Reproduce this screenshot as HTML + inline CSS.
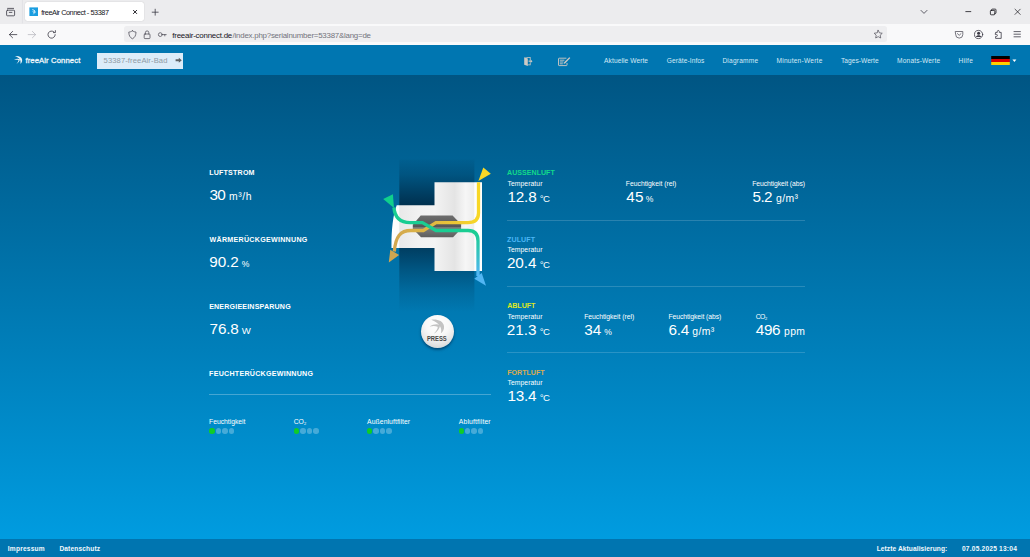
<!DOCTYPE html>
<html lang="de">
<head>
<meta charset="utf-8">
<title>freeAir Connect - 53387</title>
<style>
*{box-sizing:border-box;margin:0;padding:0}
html,body{width:1030px;height:557px;overflow:hidden}
body{font-family:"Liberation Sans",sans-serif;color:#fff;background:#0080c0;position:relative}
.abs,.t,.dots,.hr{position:absolute;white-space:nowrap}
.t{height:20px;line-height:20px}
#tabs{left:0;top:0;width:1030px;height:23.5px;background:#ececee}
#tool{left:0;top:23.5px;width:1030px;height:21.5px;background:#f9f9fa}
#tab{left:25.3px;top:2.1px;width:118.9px;height:19.2px;background:#fff;border-radius:2.5px;box-shadow:0 0 1.2px rgba(0,0,0,.22)}
#url{left:124px;top:26.2px;width:762.7px;height:16.3px;background:#eeeef0;border-radius:2.5px}
#page{left:0;top:45px;width:1030px;height:512px;background:linear-gradient(#005583 30px,#009ce0 494px)}
#nav{left:0;top:45.2px;width:1030px;height:29.8px;background:#0076b1}
#foot{left:0;top:538.7px;width:1030px;height:18.3px;background:#0075b0}
#inp{left:96.5px;top:52.5px;width:86px;height:16.2px;background:#dcecf9}
.hr{height:1px;background:rgba(255,255,255,.16)}
.dots{display:flex;gap:1.1px}
.dots i{display:block;width:5.4px;height:5.4px;border-radius:50%;background:rgba(255,255,255,.27)}
.dots i.on{background:#10cc26}
</style>
</head>
<body>
<div class="abs" id="tabs"></div>
<div class="abs" id="tool"></div>
<div class="abs" id="tab"></div>
<div class="abs" id="url"></div>
<svg class="abs" style="left:0;top:0" width="1030" height="45" viewBox="0 0 1030 45" fill="none" stroke="#3a3944" stroke-width="0.8" stroke-linecap="round" stroke-linejoin="round">
<line x1="22.4" y1="0" x2="22.4" y2="23" stroke="#d8d8de" stroke-width="0.6"/>
<!-- archive icon -->
<rect x="6.6" y="10.2" width="8" height="5.6" rx="0.8"/><path d="M7.6 8.4h6M9.3 12.4h2.6"/>
<!-- favicon -->
<rect x="29.4" y="7.4" width="8.6" height="8.6" fill="#1a9de0" stroke="none"/>
<path d="M32.6 9.6c1.6.2 2.6 1.2 2.6 2.8M34.2 10.4c.6 1.2.4 2.6-.6 3.6M33 11.4l.8 1.2" stroke="#fff" stroke-width="0.7"/>
<!-- tab close -->
<path d="M133.400 10.300l3.300 3.300M136.700 10.300l-3.300 3.300" stroke="#15141a" stroke-width="0.9"/>
<!-- plus -->
<path d="M152.2 12.2h6M155.2 9.2v6" stroke="#3a3944" stroke-width="0.8"/>
<!-- back -->
<path d="M9.4 34.6h7.4M12.6 31.4l-3.2 3.2 3.2 3.2" stroke="#3a3944"/>
<!-- forward -->
<path d="M28.2 34.6h7.4M32.4 31.4l3.2 3.2-3.2 3.2" stroke="#b9b9c0"/>
<!-- reload -->
<path d="M55.2 34.6a3.6 3.6 0 1 1-1.2-2.7M55.4 30.6v2h-2" stroke="#3a3944"/>
<!-- shield -->
<path d="M132.4 30.8c1.2.9 2.4 1.2 3.6 1.2 0 3.400-1.200 5.600-3.600 6.800-2.400-1.200-3.600-3.400-3.600-6.800 1.200 0 2.400-.3 3.600-1.200z" stroke="#55545e"/>
<!-- lock -->
<rect x="144.2" y="34" width="5.800" height="4.600" rx="0.8" stroke="#55545e"/><path d="M145.400 34v-1.400a1.700 1.700 0 0 1 3.400 0V34" stroke="#55545e"/>
<!-- key -->
<circle cx="160.300" cy="34.600" r="1.900" stroke="#55545e"/><path d="M162.200 34.600h4M164.800 34.600v1.300" stroke="#55545e"/>
<!-- star -->
<path d="M878.200 30.300l1.250 2.550 2.800.4-2.050 1.950.5 2.800-2.500-1.350-2.500 1.350.5-2.800-2.050-1.950 2.800-.4z" stroke="#55545e" stroke-width="0.75"/>
<!-- chevron -->
<path d="M921 10.400l3 3 3-3" stroke="#3a3944"/>
<!-- minimize -->
<path d="M965.800 11.600h5" stroke="#15141a"/>
<!-- restore -->
<rect x="990.400" y="10.400" width="4.400" height="4.400" rx="0.800" stroke="#15141a"/><path d="M991.600 10.200v-.3a.8.800 0 0 1 .8-.8h2.800a.8.800 0 0 1 .8.800v2.800a.8.800 0 0 1-.8.800h-.3" stroke="#15141a"/>
<!-- win close -->
<path d="M1015 9.200l5.200 5.200M1020.200 9.200l-5.200 5.200" stroke="#15141a" stroke-width="0.7"/>
<!-- pocket -->
<path d="M955.600 31.500h7.200v3a3.600 3.600 0 0 1-7.200 0z" stroke="#55545e"/><path d="M957.400 33.600l1.800 1.700 1.800-1.700" stroke="#55545e"/>
<!-- account -->
<circle cx="978.600" cy="34.500" r="4.100" stroke="#3a3944"/><circle cx="978.600" cy="33.300" r="1.500" fill="#3a3944" stroke="none"/><path d="M975.800 37c.6-1.300 1.600-1.800 2.800-1.800s2.200.5 2.800 1.800" fill="#3a3944" stroke="none"/>
<!-- extension -->
<path d="M996 32.400h1.300v-.9a1 1 0 0 1 2 0v.9h1.900v6h-5.600v-2h.8a1 1 0 0 0 0-2h-.8z" stroke="#3a3944"/>
<!-- menu -->
<path d="M1014 31.600h6.400M1014 34.200h6.400M1014 36.800h6.400" stroke="#3a3944"/>
</svg>
<div class="abs" id="page"></div>
<div class="abs" id="nav"></div>
<div class="abs" id="foot"></div>
<div class="abs" id="inp"></div>
<svg class="abs" style="left:0;top:45px" width="1030" height="30" viewBox="0 45 1030 30">
<!-- bird logo -->
<g fill="#fff" fill-opacity="0.92" transform="translate(13.900 56) scale(0.560) translate(-429.400 -319.400)">
<path d="M431.200 319.600C437.500 318.600 443.400 320.800 444.100 326C444.500 329.200 443 332 440.800 333.300C442.400 328.600 440.600 323 431.200 319.600z"/>
<path d="M429.400 326.600C433.400 323.800 437.600 323.400 440.300 325.300C439.600 329 437 332 433.800 333.700C436.600 330.400 438 328 437.400 326.600C435 325.600 432.400 325.800 429.400 326.600z"/>
</g>
<!-- input arrow -->
<path d="M175.600 59.300h3.200v-1.500l3 2.500-3 2.500v-1.500h-3.200z" fill="#5d6165"/>
<!-- logout door -->
<g fill="#cfcac4">
<path d="M524.200 57.200l3.600 1.300v7.600l-3.600-1.300z"/>
<path d="M524.600 56.900h6v3h-.8v-2.200h-2.600zM529.800 62.600h.8v2.600h-3v-.8h2.200z"/>
<path d="M528.600 60.600h2v-1.100l1.900 1.700-1.900 1.700v-1.100h-2z"/>
</g>
<!-- edit icon -->
<g fill="none" stroke="#cfcac4" stroke-width="0.900">
<path d="M566.400 58.200h-7.300a.6.600 0 0 0-.6.600v6.200a.6.600 0 0 0 .6.600h7.300a.6.600 0 0 0 .6-.6v-2"/>
<path d="M559.800 60.200h4.600M559.800 62h3.600M559.800 63.800h3"/>
</g>
<path d="M569.300 57.200l1 .9-5 5.200-1.700.6.600-1.700z" fill="#cfcac4"/>
<!-- flag -->
<rect x="991.200" y="56" width="18.600" height="3" fill="#000"/>
<rect x="991.200" y="59" width="18.600" height="3" fill="#dd0000"/>
<rect x="991.200" y="62" width="18.600" height="3" fill="#ffce00"/>
<path d="M1012.400 59.500h4l-2 2.400z" fill="#fff"/>
</svg>
<svg class="abs" style="left:380px;top:150px" width="125" height="215" viewBox="380 150 125 215">
<defs>
<linearGradient id="col" x1="0" y1="159.500" x2="0" y2="312" gradientUnits="userSpaceOnUse">
<stop offset="0" stop-color="#001a30" stop-opacity="0.040"/>
<stop offset="0.100" stop-color="#001a30" stop-opacity="0.220"/>
<stop offset="0.200" stop-color="#001a30" stop-opacity="0.480"/>
<stop offset="0.300" stop-color="#001a30" stop-opacity="0.720"/>
<stop offset="0.580" stop-color="#001a30" stop-opacity="0.580"/>
<stop offset="0.720" stop-color="#001a30" stop-opacity="0.330"/>
<stop offset="0.860" stop-color="#001a30" stop-opacity="0.130"/>
<stop offset="1" stop-color="#001a30" stop-opacity="0"/>
</linearGradient>
<linearGradient id="wh" x1="391" y1="0" x2="482" y2="0" gradientUnits="userSpaceOnUse">
<stop offset="0" stop-color="#ffffff"/>
<stop offset="0.085" stop-color="#fbfbfb"/>
<stop offset="0.095" stop-color="#e9e9e9"/>
<stop offset="0.300" stop-color="#f1f1f1"/>
<stop offset="0.480" stop-color="#f3f3f3"/>
<stop offset="0.700" stop-color="#e4e4e4"/>
<stop offset="0.820" stop-color="#f6f6f6"/>
<stop offset="0.910" stop-color="#ededed"/>
<stop offset="0.920" stop-color="#fdfdfd"/>
<stop offset="1" stop-color="#ffffff"/>
</linearGradient>
<linearGradient id="hx" x1="0" y1="215.500" x2="0" y2="238" gradientUnits="userSpaceOnUse">
<stop offset="0" stop-color="#6e6e6e"/>
<stop offset="0.500" stop-color="#565656"/>
<stop offset="0.540" stop-color="#7c7c7c"/>
<stop offset="1" stop-color="#5c5c5c"/>
</linearGradient>
<linearGradient id="yl" x1="395" y1="0" x2="478" y2="0" gradientUnits="userSpaceOnUse">
<stop offset="0" stop-color="#d2a74f"/>
<stop offset="0.500" stop-color="#e2bb40"/>
<stop offset="1" stop-color="#f8d726"/>
</linearGradient>
<linearGradient id="gr" x1="0" y1="232" x2="0" y2="274" gradientUnits="userSpaceOnUse">
<stop offset="0" stop-color="#1acd92"/>
<stop offset="0.350" stop-color="#2cc6b0"/>
<stop offset="1" stop-color="#52b6f3"/>
</linearGradient>
</defs>
<rect x="399.300" y="159.500" width="75.100" height="152.500" fill="url(#col)"/>
<path d="M434.500 182.200H482V271H434.500V248H391.500C391.300 232 392.600 216 396.700 205.300H434.500z" fill="url(#wh)"/>
<path d="M420.700 215.500H452.600L461.100 224.600V228.800L453.100 237.300H421L412.800 228.800V224.800z" fill="url(#hx)"/>
<path d="M478.500 182.200V213Q478.500 222.600 468 222.600H436L423.400 230.500H411C400.500 230.500 395.600 236 394.300 251.500" fill="none" stroke="url(#yl)" stroke-width="3.300"/>
<path d="M393.900 207.500C394.800 217 400 222.600 410 222.600H422.400L436 230.500H468Q478 230.500 478 241V276" fill="none" stroke="url(#gr)" stroke-width="3.300"/>
<path d="M478.400 180.900L483.300 167.500L490.800 173.800z" fill="#fad826"/>
<path d="M383.200 199L392.900 194.300L394 207.900z" fill="#10cf8c"/>
<path d="M390.300 249.800L399.100 255L388.800 262.600z" fill="#d0a650"/>
<path d="M474.300 278.800L481.700 273L486 285.800z" fill="#52b6f3"/>
</svg>
<div class="abs" style="left:420.800px;top:314.900px;width:33.600px;height:33.600px;border-radius:50%;background:radial-gradient(circle at 50% 28%,#ffffff 0%,#f8f8f8 40%,#e6e6e6 68%,#d2d2d2 88%,#c4c4c4 100%);box-shadow:0 1.800px 2.600px rgba(0,35,70,.6)"></div>
<svg class="abs" style="left:420px;top:314px" width="36" height="36" viewBox="420 314 36 36">
<g fill="#c3c3c3">
<path d="M431.300 319.700C437.500 318.900 443.200 321 444 326C444.500 329.200 443 332 440.900 333.300C442.300 328.600 440.300 323.300 431.300 319.700z"/>
<path d="M429.500 326.600C433.400 324 437.600 323.600 440.200 325.300C439.500 329 437 332 433.900 333.700C436.600 330.400 438.200 328 437.600 326.700C435 325.800 432.400 326 429.500 326.600z"/>
</g>
</svg>
<div class="hr" style="left:209px;top:394.1px;width:282px;background:rgba(255,255,255,.27)"></div>
<div class="hr" style="left:507px;top:219.9px;width:297.5px"></div>
<div class="hr" style="left:507px;top:286.3px;width:297.5px"></div>
<div class="hr" style="left:507px;top:352.3px;width:297.5px"></div>
<div class="dots" style="left:209.2px;top:428.3px"><i class="on"></i><i></i><i></i><i></i></div>
<div class="dots" style="left:293.8px;top:428.3px"><i class="on"></i><i></i><i></i><i></i></div>
<div class="dots" style="left:366.8px;top:428.3px"><i class="on"></i><i></i><i></i><i></i></div>
<div class="dots" style="left:458.5px;top:428.3px"><i class="on"></i><i></i><i></i><i></i></div>
<div class="t" style="left:41.20px;top:3.00px;font-size:7.3px;color:#15141a;letter-spacing:-0.441px">freeAir Connect - 53387</div>
<div class="t" style="left:172.30px;top:26.00px;font-size:7.9px;color:#15141a;letter-spacing:-0.215px">freeair-connect.de</div>
<div class="t" style="left:232.60px;top:26.00px;font-size:7.9px;color:#73737c;letter-spacing:-0.227px">/index.php?serialnumber=53387&amp;lang=de</div>
<div class="t" style="left:25.40px;top:51.00px;font-size:7.7px;color:#f2f8fc;letter-spacing:0.105px;-webkit-text-stroke:0.28px #f2f8fc">freeAir Connect</div>
<div class="t" style="left:103.56px;top:51.00px;font-size:7.6px;color:#8f9aa4;letter-spacing:0.110px">53387-freeAir-Bad</div>
<div class="t" style="left:604.10px;top:51.00px;font-size:6.6px;color:#d4e9f6;letter-spacing:0.090px">Aktuelle Werte</div>
<div class="t" style="left:666.69px;top:51.00px;font-size:6.6px;color:#d4e9f6;letter-spacing:0.094px">Geräte-Infos</div>
<div class="t" style="left:722.38px;top:51.00px;font-size:6.6px;color:#d4e9f6;letter-spacing:0.209px">Diagramme</div>
<div class="t" style="left:776.48px;top:51.00px;font-size:6.6px;color:#d4e9f6;letter-spacing:0.227px">Minuten-Werte</div>
<div class="t" style="left:841.00px;top:51.00px;font-size:6.6px;color:#d4e9f6;letter-spacing:0.038px">Tages-Werte</div>
<div class="t" style="left:897.08px;top:51.00px;font-size:6.6px;color:#d4e9f6;letter-spacing:0.160px">Monats-Werte</div>
<div class="t" style="left:958.38px;top:51.00px;font-size:6.6px;color:#d4e9f6;letter-spacing:0.320px">Hilfe</div>
<div class="t" style="left:7.79px;top:539.00px;font-size:6.6px;color:#f4f9fc;letter-spacing:0.213px;font-weight:bold">Impressum</div>
<div class="t" style="left:59.39px;top:539.00px;font-size:6.6px;color:#f4f9fc;letter-spacing:0.148px;font-weight:bold">Datenschutz</div>
<div class="t" style="left:876.69px;top:539.00px;font-size:6.6px;color:#f4f9fc;letter-spacing:0.091px;font-weight:bold">Letzte Aktualisierung:</div>
<div class="t" style="left:961.99px;top:539.00px;font-size:6.6px;color:#f4f9fc;letter-spacing:0.208px;font-weight:bold">07.05.2025 13:04</div>
<div class="t" style="left:427.49px;top:329.00px;font-size:6.6px;color:#484848;transform:scaleX(0.886);transform-origin:-0.41px 0;font-weight:bold">PRESS</div>
<div class="t" style="left:209.16px;top:163.00px;font-size:7.1px;color:#fff;letter-spacing:0.204px;font-weight:bold">LUFTSTROM</div>
<div class="t" style="left:209.60px;top:230.00px;font-size:7.1px;color:#fff;letter-spacing:0.279px;font-weight:bold">WÄRMERÜCKGEWINNUNG</div>
<div class="t" style="left:209.16px;top:297.00px;font-size:7.1px;color:#fff;letter-spacing:0.175px;font-weight:bold">ENERGIEEINSPARUNG</div>
<div class="t" style="left:209.06px;top:364.00px;font-size:7.1px;color:#fff;letter-spacing:0.266px;font-weight:bold">FEUCHTERÜCKGEWINNUNG</div>
<div class="t" style="left:209.42px;top:185.00px;font-size:15.3px;color:#fff;letter-spacing:-0.659px">30</div>
<div class="t" style="left:229.05px;top:187.00px;font-size:10.4px;color:#fff;letter-spacing:0.578px">m³/h</div>
<div class="t" style="left:209.18px;top:252.00px;font-size:15.3px;color:#fff;letter-spacing:-0.047px">90.2</div>
<div class="t" style="left:241.73px;top:254.00px;font-size:8.6px;color:#fff;letter-spacing:0.000px">%</div>
<div class="t" style="left:209.58px;top:319.00px;font-size:15.3px;color:#fff;letter-spacing:-0.180px">76.8</div>
<div class="t" style="left:241.70px;top:321.00px;font-size:9.6px;color:#fff;letter-spacing:0.000px">W</div>
<div class="t" style="left:209.07px;top:412.00px;font-size:6.8px;color:#fff;letter-spacing:-0.032px">Feuchtigkeit</div>
<div class="t" style="left:293.68px;top:412.00px;font-size:6.8px;color:#fff;letter-spacing:-0.109px">CO₂</div>
<div class="t" style="left:367.10px;top:412.00px;font-size:6.8px;color:#fff;letter-spacing:0.077px">Außenluftfilter</div>
<div class="t" style="left:458.80px;top:412.00px;font-size:6.8px;color:#fff;letter-spacing:0.145px">Abluftfilter</div>
<div class="t" style="left:507.09px;top:163.00px;font-size:7.1px;color:#12d98b;letter-spacing:-0.001px;font-weight:bold">AUSSENLUFT</div>
<div class="t" style="left:507.09px;top:230.00px;font-size:7.1px;color:#4ab6f5;letter-spacing:0.064px;font-weight:bold">ZULUFT</div>
<div class="t" style="left:507.19px;top:296.00px;font-size:7.1px;color:#dfe81c;letter-spacing:-0.034px;font-weight:bold">ABLUFT</div>
<div class="t" style="left:507.16px;top:363.00px;font-size:7.1px;color:#d9ab52;letter-spacing:-0.001px;font-weight:bold">FORTLUFT</div>
<div class="t" style="left:507.49px;top:174.00px;font-size:6.8px;color:#fff;letter-spacing:0.061px">Temperatur</div>
<div class="t" style="left:507.49px;top:240.00px;font-size:6.8px;color:#fff;letter-spacing:0.061px">Temperatur</div>
<div class="t" style="left:507.49px;top:307.00px;font-size:6.8px;color:#fff;letter-spacing:0.061px">Temperatur</div>
<div class="t" style="left:507.49px;top:373.00px;font-size:6.8px;color:#fff;letter-spacing:0.061px">Temperatur</div>
<div class="t" style="left:507.44px;top:187.00px;font-size:15.3px;color:#fff;letter-spacing:-0.167px">12.8</div>
<div class="t" style="left:539.75px;top:189.00px;font-size:9.6px;color:#fff;letter-spacing:-0.689px">°C</div>
<div class="t" style="left:506.88px;top:253.00px;font-size:15.3px;color:#fff;letter-spacing:-0.060px">20.4</div>
<div class="t" style="left:539.75px;top:255.00px;font-size:9.6px;color:#fff;letter-spacing:-0.689px">°C</div>
<div class="t" style="left:506.78px;top:320.00px;font-size:15.3px;color:#fff;letter-spacing:0.020px">21.3</div>
<div class="t" style="left:539.85px;top:322.00px;font-size:9.6px;color:#fff;letter-spacing:-0.789px">°C</div>
<div class="t" style="left:507.44px;top:386.00px;font-size:15.3px;color:#fff;letter-spacing:-0.247px">13.4</div>
<div class="t" style="left:539.75px;top:388.00px;font-size:9.6px;color:#fff;letter-spacing:-0.689px">°C</div>
<div class="t" style="left:625.87px;top:174.00px;font-size:6.8px;color:#fff;letter-spacing:-0.015px">Feuchtigkeit (rel)</div>
<div class="t" style="left:626.16px;top:187.00px;font-size:15.3px;color:#fff;letter-spacing:0.441px">45</div>
<div class="t" style="left:645.73px;top:189.00px;font-size:8.6px;color:#fff;letter-spacing:0.000px">%</div>
<div class="t" style="left:752.27px;top:174.00px;font-size:6.8px;color:#fff;letter-spacing:-0.074px">Feuchtigkeit (abs)</div>
<div class="t" style="left:752.52px;top:187.00px;font-size:15.3px;color:#fff;letter-spacing:-0.585px">5.2</div>
<div class="t" style="left:776.07px;top:189.00px;font-size:10.4px;color:#fff;letter-spacing:0.392px">g/m³</div>
<div class="t" style="left:584.17px;top:307.00px;font-size:6.8px;color:#fff;letter-spacing:-0.033px">Feuchtigkeit (rel)</div>
<div class="t" style="left:584.22px;top:320.00px;font-size:15.3px;color:#fff;letter-spacing:0.141px">34</div>
<div class="t" style="left:604.13px;top:322.00px;font-size:8.6px;color:#fff;letter-spacing:0.000px">%</div>
<div class="t" style="left:668.47px;top:307.00px;font-size:6.8px;color:#fff;letter-spacing:-0.068px">Feuchtigkeit (abs)</div>
<div class="t" style="left:668.58px;top:320.00px;font-size:15.3px;color:#fff;letter-spacing:-0.285px">6.4</div>
<div class="t" style="left:692.27px;top:322.00px;font-size:10.4px;color:#fff;letter-spacing:0.425px">g/m³</div>
<div class="t" style="left:755.68px;top:307.00px;font-size:6.8px;color:#fff;letter-spacing:-0.509px">CO₂</div>
<div class="t" style="left:755.76px;top:320.00px;font-size:15.3px;color:#fff;letter-spacing:-0.334px">496</div>
<div class="t" style="left:784.05px;top:322.00px;font-size:10.4px;color:#fff;letter-spacing:0.329px">ppm</div>
</body>
</html>
